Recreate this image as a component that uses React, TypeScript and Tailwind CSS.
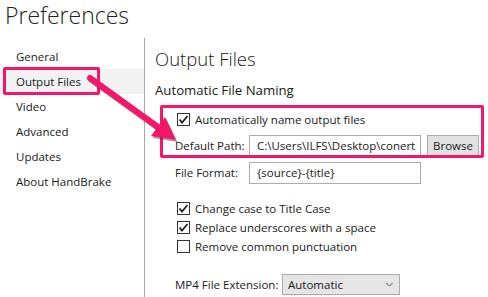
import React from 'react';

const pink = '#f2176b';

function Check({ checked }: { checked: boolean }) {
  return (
    <span className="w-[13px] h-[13px] border border-[#333333] bg-white flex items-center justify-center shrink-0">
      {checked && (
        <svg width="11" height="11" viewBox="0 0 11 11">
          <path d="M1.5 5.5 L4 8.5 L9.5 2" fill="none" stroke="#222222" strokeWidth="1.8" />
        </svg>
      )}
    </span>
  );
}

function CheckRow({ checked, label, className = '' }: { checked: boolean; label: string; className?: string }) {
  return (
    <div className={`flex items-center gap-[5px] h-[19px] pl-[22px] ${className}`}>
      <Check checked={checked} />
      <span className="text-[11.5px] text-[#1a1a1a] whitespace-nowrap">{label}</span>
    </div>
  );
}

const navItems = ['General', 'Output Files', 'Video', 'Advanced', 'Updates', 'About HandBrake'];

export default function App() {
  return (
    <div
      className="relative w-[488px] h-[297px] bg-white overflow-hidden text-[#1a1a1a]"
      style={{ fontFamily: '"Open Sans", "Noto Sans", sans-serif' }}
    >
      <div className="h-[38px] pl-[5px] text-[23px] font-light leading-[30px] text-[#222222]">Preferences</div>

      <div className="flex">
        <div className="w-[145px] h-[259px] border-r border-[#a8a8a8] pt-[6px] shrink-0">
          {navItems.map((item) => (
            <div
              key={item}
              className={`h-[25px] flex items-center pl-4 text-[11.5px] ${item === 'Output Files' ? 'bg-[#f2f2f2]' : ''}`}
            >
              {item}
            </div>
          ))}
        </div>

        <div className="flex-1 pl-[10px]">
          <div className="mt-[7px] h-[28px] flex items-center text-[18.5px] font-light">Output Files</div>
          <div className="mt-[7px] h-[22px] flex items-center text-[13.2px]">Automatic File Naming</div>

          <CheckRow checked label="Automatically name output files" className="mt-[8px]" />

          <div className="mt-[6px] h-[22px] flex items-center pl-[20px] text-[11.5px] whitespace-nowrap">
            <span className="w-[74px] shrink-0">Default Path:</span>
            <div className="w-[172px] h-[22px] border border-[#abadb3] px-[7px] flex items-center overflow-hidden">
              C:\Users\ILFS\Desktop\conert
            </div>
            <div className="ml-[6px] w-[52px] h-[22px] bg-[#e1e1e1] border border-[#adadad] flex items-center justify-center">
              Browse
            </div>
          </div>

          <div className="mt-[5px] h-[22px] flex items-center pl-[20px] text-[11.5px] whitespace-nowrap">
            <span className="w-[74px] shrink-0">File Format:</span>
            <div className="w-[172px] h-[22px] border border-[#abadb3] px-[7px] flex items-center">{'{source}-{title}'}</div>
          </div>

          <CheckRow checked label="Change case to Title Case" className="mt-[15px]" />
          <CheckRow checked label="Replace underscores with a space" />
          <CheckRow checked={false} label="Remove common punctuation" />

          <div className="mt-[18px] h-[21px] flex items-center pl-[20px] text-[11.5px] whitespace-nowrap">
            <span className="w-[107px] shrink-0">MP4 File Extension:</span>
            <div className="w-[118px] h-[21px] bg-[#e5e5e5] border border-[#acacac] pl-[5px] pr-[6px] flex items-center justify-between">
              <span>Automatic</span>
              <svg width="7" height="5" viewBox="0 0 7 5">
                <path d="M0.5 1 L3.5 4 L6.5 1" fill="none" stroke="#555555" strokeWidth="1" />
              </svg>
            </div>
          </div>
        </div>
      </div>

      {/* annotation boxes */}
      <div className="absolute left-[3px] top-[67px] w-[97px] h-[28px] border-[3px] rounded-[2px]" style={{ borderColor: pink }} />
      <div className="absolute left-[160px] top-[105px] w-[324px] h-[53px] border-[3px] rounded-[2px]" style={{ borderColor: pink }} />

      <svg className="absolute left-0 top-0 pointer-events-none" width="488" height="297">
        <g transform="translate(1.5,2)" opacity="0.45">
          <path d="M90 78 L158 127" stroke="#333333" strokeWidth="6" strokeLinecap="round" />
          <path d="M176 140 L151 136 L165 117 Z" fill="#333333" />
        </g>
        <path d="M90 78 L158 127" stroke={pink} strokeWidth="6" strokeLinecap="round" />
        <path d="M176 140 L151 136 L165 117 Z" fill={pink} />
      </svg>
    </div>
  );
}
